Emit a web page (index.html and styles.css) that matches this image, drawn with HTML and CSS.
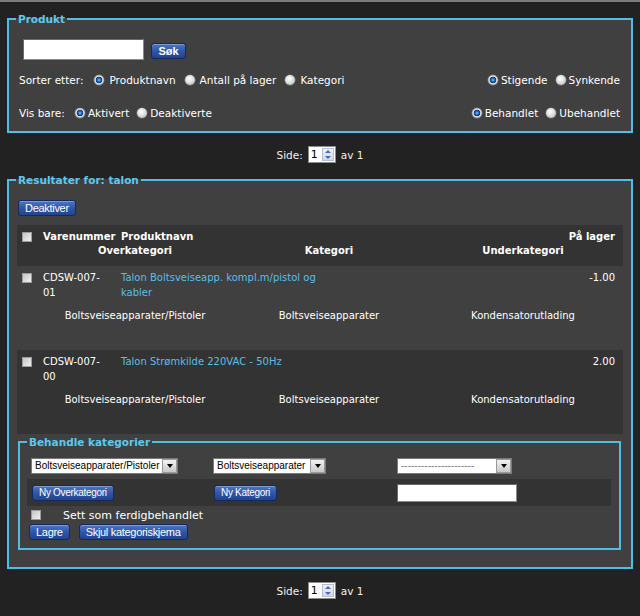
FILE: index.html
```html
<!DOCTYPE html>
<html lang="no">
<head>
<meta charset="utf-8">
<title>Produkt</title>
<link rel="stylesheet" href="styles.css">
</head>
<body>
<fieldset class="panel panel-top">
  <legend class="panel-title">Produkt</legend>
  <div class="search-row">
    <input class="textbox search-input" type="text">
    <button class="btn btn-bold btn-search">Søk</button>
  </div>
  <div class="opt-row sort-row">
    <div class="opt-group sort-left">
      <span class="opt-label">Sorter etter:</span>
      <span class="radio on"></span><span class="opt-text">Produktnavn</span>
      <span class="radio"></span><span class="opt-text">Antall på lager</span>
      <span class="radio"></span><span class="opt-text">Kategori</span>
    </div>
    <div class="opt-group">
      <span class="radio on"></span><span class="opt-text">Stigende</span>
      <span class="radio"></span><span class="opt-text">Synkende</span>
    </div>
  </div>
  <div class="opt-row vis-row">
    <div class="opt-group">
      <span class="opt-label">Vis bare:</span>
      <span class="radio on"></span><span class="opt-text">Aktivert</span>
      <span class="radio"></span><span class="opt-text">Deaktiverte</span>
    </div>
    <div class="opt-group">
      <span class="radio on"></span><span class="opt-text">Behandlet</span>
      <span class="radio"></span><span class="opt-text">Ubehandlet</span>
    </div>
  </div>
</fieldset>

<div class="pager pager-top">
  <span class="pager-text">Side:</span>
  <span class="spin"><span class="spin-val">1</span><span class="spin-btns"><span class="spin-up"></span><span class="spin-down"></span></span></span>
  <span class="pager-text">av 1</span>
</div>

<fieldset class="panel panel-results">
  <legend class="panel-title">Resultater for: talon</legend>
  <button class="btn btn-deact">Deaktiver</button>
  <div class="grid-table">
    <div class="trow thead">
      <div class="tmain">
        <span class="check"></span>
        <span class="cell-num">Varenummer</span>
        <span class="cell-name">Produktnavn</span>
        <span class="cell-stock">På lager</span>
      </div>
      <div class="tsub">
        <span>Overkategori</span><span>Kategori</span><span>Underkategori</span>
      </div>
    </div>
    <div class="trow tbody-row odd">
      <div class="tmain">
        <span class="check"></span>
        <span class="cell-num">CDSW-007-01</span>
        <span class="cell-name"><span class="link">Talon Boltsveiseapp. kompl.m/pistol og kabler</span></span>
        <span class="cell-stock">-1.00</span>
      </div>
      <div class="tsub">
        <span>Boltsveiseapparater/Pistoler</span><span>Boltsveiseapparater</span><span>Kondensatorutlading</span>
      </div>
    </div>
    <div class="trow tbody-row even">
      <div class="tmain">
        <span class="check"></span>
        <span class="cell-num">CDSW-007-00</span>
        <span class="cell-name"><span class="link">Talon Strømkilde 220VAC - 50Hz</span></span>
        <span class="cell-stock">2.00</span>
      </div>
      <div class="tsub">
        <span>Boltsveiseapparater/Pistoler</span><span>Boltsveiseapparater</span><span>Kondensatorutlading</span>
      </div>
    </div>
  </div>

  <fieldset class="panel panel-inner">
    <legend class="panel-title">Behandle kategorier</legend>
    <div class="cat-grid cat-selects">
      <div class="cat-cell"><span class="select sel-1"><span class="select-text">Boltsveiseapparater/Pistoler</span><span class="select-arrow"></span></span></div>
      <div class="cat-cell"><span class="select sel-2"><span class="select-text">Boltsveiseapparater</span><span class="select-arrow"></span></span></div>
      <div class="cat-cell"><span class="select sel-3"><span class="select-text select-dashes">----------------------</span><span class="select-arrow"></span></span></div>
    </div>
    <div class="cat-grid cat-band">
      <div class="cat-cell"><button class="btn btn-sm">Ny Overkategori</button></div>
      <div class="cat-cell"><button class="btn btn-sm">Ny Kategori</button></div>
      <div class="cat-cell"><input class="textbox band-input" type="text"></div>
    </div>
    <div class="done-row"><span class="check"></span><span class="done-text">Sett som ferdigbehandlet</span></div>
    <div class="action-row"><button class="btn">Lagre</button><button class="btn">Skjul kategoriskjema</button></div>
  </fieldset>
</fieldset>

<div class="pager pager-bottom">
  <span class="pager-text">Side:</span>
  <span class="spin"><span class="spin-val">1</span><span class="spin-btns"><span class="spin-up"></span><span class="spin-down"></span></span></span>
  <span class="pager-text">av 1</span>
</div>
</body>
</html>
```

FILE: styles.css
```css
html {
  background: #222222;
}
body {
  margin: 0;
  padding: 0 7px;
  border-top: 2px solid #7c7c7c;
  background: #222222;
  color: #ffffff;
  font-family: "DejaVu Sans", Verdana, sans-serif;
  font-size: 11px;
}

/* panels */
.panel {
  margin: 0;
  padding: 0 7px;
  border: 2px solid #52bde0;
  background: #404040;
  min-width: 0;
}
.panel-title {
  padding: 0 2px;
  font-family: "DejaVu Sans", Verdana, sans-serif;
  font-weight: bold;
  font-size: 10.5px;
  line-height: 14px;
  color: #5cc9ee;
}
.panel-top {
  margin-top: 10px;
  padding-bottom: 10px;
}
.panel-results {
  padding-bottom: 17px;
}
.panel-inner {
  margin: 1px 3px 0 2px;
  padding-bottom: 8px;
}

/* buttons */
.btn {
  box-sizing: border-box;
  height: 16px;
  margin: 0;
  padding: 0 6px;
  border: 1px solid #15295a;
  border-radius: 3px;
  background: linear-gradient(#4c76c8, #2e54a3 55%, #21448e);
  box-shadow: inset 0 1px 0 rgba(255, 255, 255, 0.28);
  color: #ffffff;
  font-family: "Liberation Sans", Arial, sans-serif;
  font-size: 11px;
  letter-spacing: -0.3px;
  line-height: 14px;
  white-space: nowrap;
}
.btn-bold {
  font-weight: bold;
  letter-spacing: 0;
}
.btn-sm {
  font-size: 10px;
}
.btn-deact {
  display: block;
  margin: 13px 0 0 2px;
}

/* search */
.search-row {
  display: flex;
  align-items: flex-end;
  margin: 13px 0 0 7px;
}
.textbox {
  box-sizing: border-box;
  margin: 0;
  padding: 0;
  background: #ffffff;
  border: 1px solid #8a8a8a;
  border-top-color: #6a6a6a;
  border-left-color: #6a6a6a;
  outline: none;
}
.search-input {
  width: 121px;
  height: 21px;
}
.search-row .btn-search {
  width: 35px;
  padding: 0;
  margin: 0 0 1px 7px;
}

/* option rows */
.opt-row {
  display: flex;
  justify-content: space-between;
  align-items: center;
  height: 16px;
  margin: 0 4px 0 3px;
}
.sort-row {
  margin-top: 12px;
}
.vis-row {
  margin-top: 17px;
}
.opt-group {
  display: flex;
  align-items: center;
  white-space: nowrap;
  font-size: 10.5px;
  line-height: 16px;
}
.opt-label {
  margin-right: 2px;
}
.radio {
  flex: none;
  width: 10px;
  height: 10px;
  margin: 0 3px 0 8px;
  border-radius: 50%;
  background: radial-gradient(circle at 42% 38%, #ffffff 0, #e4e4e4 40%, #a9a9a9 100%);
  box-shadow: 0 0 0 0.5px #7d7d7d;
}
.radio.on {
  background: radial-gradient(circle at 50% 50%, #a6dcff 0, #2a7fd0 1.2px, #0d4a92 2.6px, #0a2f5e 3.2px, #e6e6e6 3.6px, #b4b4b4 5px);
}
.sort-left .radio {
  margin: 0 5px 0 9px;
}

/* pager */
.pager {
  display: flex;
  justify-content: center;
  align-items: center;
  height: 17px;
  font-size: 10.5px;
  color: #f0f0f0;
}
.pager-top {
  margin: 13px 0 10px;
}
.pager-bottom {
  margin-top: 13px;
}
.spin {
  display: inline-flex;
  align-items: center;
  box-sizing: border-box;
  width: 28px;
  height: 17px;
  margin: 0 5px;
  border: 1px solid #8c8c8c;
  background: #ffffff;
}
.spin-val {
  flex: 1;
  padding-left: 2px;
  color: #000000;
  font-size: 11px;
  line-height: 13px;
}
.spin-btns {
  display: flex;
  flex-direction: column;
  box-sizing: border-box;
  width: 12px;
  height: 13px;
  margin-right: 1px;
  border: 1px solid #b6bfcc;
  background: linear-gradient(#eef1f6, #d3d9e4);
}
.spin-up,
.spin-down {
  flex: 1;
  display: flex;
  align-items: center;
  justify-content: center;
}
.spin-up::after {
  content: "";
  border-left: 3px solid transparent;
  border-right: 3px solid transparent;
  border-bottom: 3px solid #4a6cb8;
}
.spin-down::after {
  content: "";
  border-left: 3px solid transparent;
  border-right: 3px solid transparent;
  border-top: 3px solid #4a6cb8;
}

/* table */
.grid-table {
  margin: 9px 1px 0 1px;
  font-size: 10px;
}
.trow.thead {
  background: #333333;
  padding: 5px 0 8px;
  font-weight: bold;
  line-height: 14px;
}
.tbody-row {
  padding: 4px 0 27px;
  line-height: 15px;
}
.tbody-row.even {
  background: #333333;
}
.tmain {
  display: grid;
  grid-template-columns: 26px 78px 210px 1fr;
  padding-right: 8px;
}
.check {
  box-sizing: border-box;
  width: 10px;
  height: 10px;
  margin: 2px 0 0 5px;
  border: 1px solid #9c9c9c;
  background: linear-gradient(135deg, #c4c4c4, #f2f2f2);
}
.tbody-row .check {
  margin-top: 3px;
}
.cell-num {
  padding-right: 16px;
}
.cell-stock {
  text-align: right;
}
.link {
  color: #59bfe6;
}
.tsub {
  display: grid;
  grid-template-columns: repeat(3, 1fr);
  margin: 0 3px 0 21px;
  text-align: center;
}
.tbody-row .tsub {
  margin-top: 8px;
}

/* category editor */
.cat-grid {
  display: grid;
  grid-template-columns: 182px 184px 1fr;
}
.cat-cell {
  padding-left: 4px;
  display: flex;
  align-items: center;
}
.cat-selects {
  margin-top: 9px;
}
.select {
  display: inline-flex;
  box-sizing: border-box;
  height: 16px;
  border: 1px solid #7a7a7a;
  background: #ffffff;
}
.sel-1 {
  width: 147px;
}
.sel-2 {
  width: 113px;
}
.sel-3 {
  width: 115px;
}
.select-text {
  flex: 1;
  overflow: hidden;
  padding-left: 3px;
  color: #000000;
  font-family: "Liberation Sans", Arial, sans-serif;
  font-size: 10px;
  line-height: 14px;
  white-space: nowrap;
}
.select-dashes {
  color: #808080;
}
.select-arrow {
  display: flex;
  align-items: center;
  justify-content: center;
  box-sizing: border-box;
  width: 15px;
  border: 1px solid #9a9a9a;
  background: linear-gradient(#f2f2f2, #c9c9c9);
}
.select-arrow::after {
  content: "";
  border-left: 3.5px solid transparent;
  border-right: 3.5px solid transparent;
  border-top: 4px solid #000000;
}
.cat-band {
  height: 27px;
  margin: 5px 1px 0 0;
  background: #333333;
  align-items: center;
}
.cat-band .btn {
  margin-left: 1px;
}
.band-input {
  width: 120px;
  height: 18px;
}
.done-row {
  display: flex;
  align-items: center;
  height: 14px;
  margin-top: 2px;
}
.done-row .check {
  margin: 0 0 0 4px;
}
.done-text {
  margin-left: 22px;
  font-size: 11px;
}
.action-row {
  display: flex;
  gap: 9px;
  margin: 2px 0 0 2px;
}
```
